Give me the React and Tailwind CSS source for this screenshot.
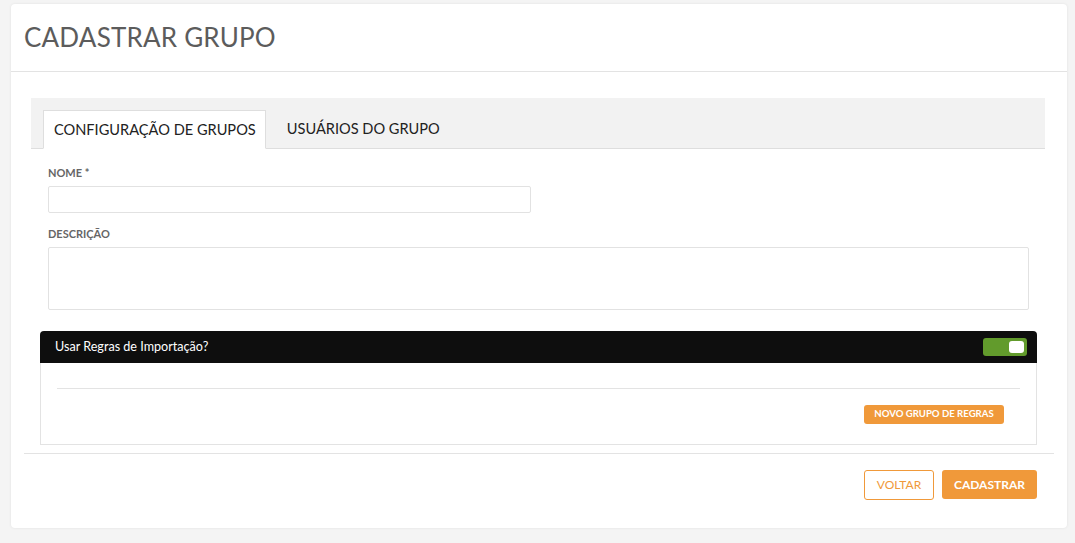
export default function App() {
  return (
    <div className="min-h-[543px] bg-[#f4f4f4] pt-[4px] px-[11px] pb-4" style={{ fontFamily: "Lato, 'Open Sans', sans-serif" }}>
      <div className="bg-white rounded-[4px] shadow-[0_0_3px_rgba(0,0,0,0.08)] w-[1056px]">
        {/* Header */}
        <div className="h-[68px] flex items-center px-[13px] border-b border-[#e3e3e3]">
          <h1 className="text-[26px] text-[#5c5c5c] tracking-[0.2px]">CADASTRAR GRUPO</h1>
        </div>

        <div className="pt-[26px] pl-[20px] pr-[22px]">
          {/* Tabs */}
          <div className="bg-[#f2f2f2] h-[51px] flex items-end pl-[12px] border-b border-[#dedede]">
            <div className="h-[39px] -mb-px bg-white border border-[#dedede] border-b-white pl-[10px] pr-[9px] flex items-center text-[14.6px] text-[#222]">
              CONFIGURAÇÃO DE GRUPOS
            </div>
            <div className="h-[39px] px-[21px] flex items-center text-[14.6px] text-[#222]">
              USUÁRIOS DO GRUPO
            </div>
          </div>

          {/* Form */}
          <div className="pl-[17px] pt-[17px]">
            <label className="block text-[11px] font-bold text-[#666] leading-[14px]">NOME *</label>
            <input className="mt-[6px] block w-[483px] h-[27px] border border-[#e2e2e2] rounded-[2px]" />
            <label className="block mt-[14px] text-[11px] font-bold text-[#666] leading-[14px]">DESCRIÇÃO</label>
            <textarea className="mt-[6px] block w-[981px] h-[63px] border border-[#e2e2e2] rounded-[2px] resize-none" />
          </div>

          {/* Import rules panel */}
          <div className="mt-[21px] ml-[9px] w-[997px]">
            <div className="h-[32px] bg-[#0e0e0e] rounded-t-[4px] flex items-center justify-between pl-[15px] pr-[10px]">
              <span className="text-[12.6px] text-white">Usar Regras de Importação?</span>
              <div className="w-[44px] h-[18px] bg-[#629b2c] rounded-[3px] flex items-center justify-end pr-[3px]">
                <div className="w-[15px] h-[12px] bg-white rounded-[3px]" />
              </div>
            </div>
            <div className="border border-t-0 border-[#e3e3e3] h-[82px] px-[16px] pt-[25px]">
              <div className="border-t border-[#e3e3e3]" />
              <div className="flex justify-end pr-[16px] pt-[16px]">
                <button className="h-[19px] w-[140px] bg-[#f0993a] rounded-[3px] text-[9.6px] font-bold text-white">
                  NOVO GRUPO DE REGRAS
                </button>
              </div>
            </div>
          </div>
        </div>

        {/* Footer */}
        <div className="mt-[8px] mx-[13px] border-t border-[#e3e3e3]" />
        <div className="flex justify-end gap-[8px] pt-[16px] pb-[28px] pr-[30px]">
          <button className="h-[30px] w-[70px] border border-[#f0993a] rounded-[3px] text-[12px] text-[#f0993a]">
            VOLTAR
          </button>
          <button className="h-[29px] w-[95px] bg-[#f0993a] rounded-[3px] text-[12px] font-bold text-white">
            CADASTRAR
          </button>
        </div>
      </div>
    </div>
  );
}
